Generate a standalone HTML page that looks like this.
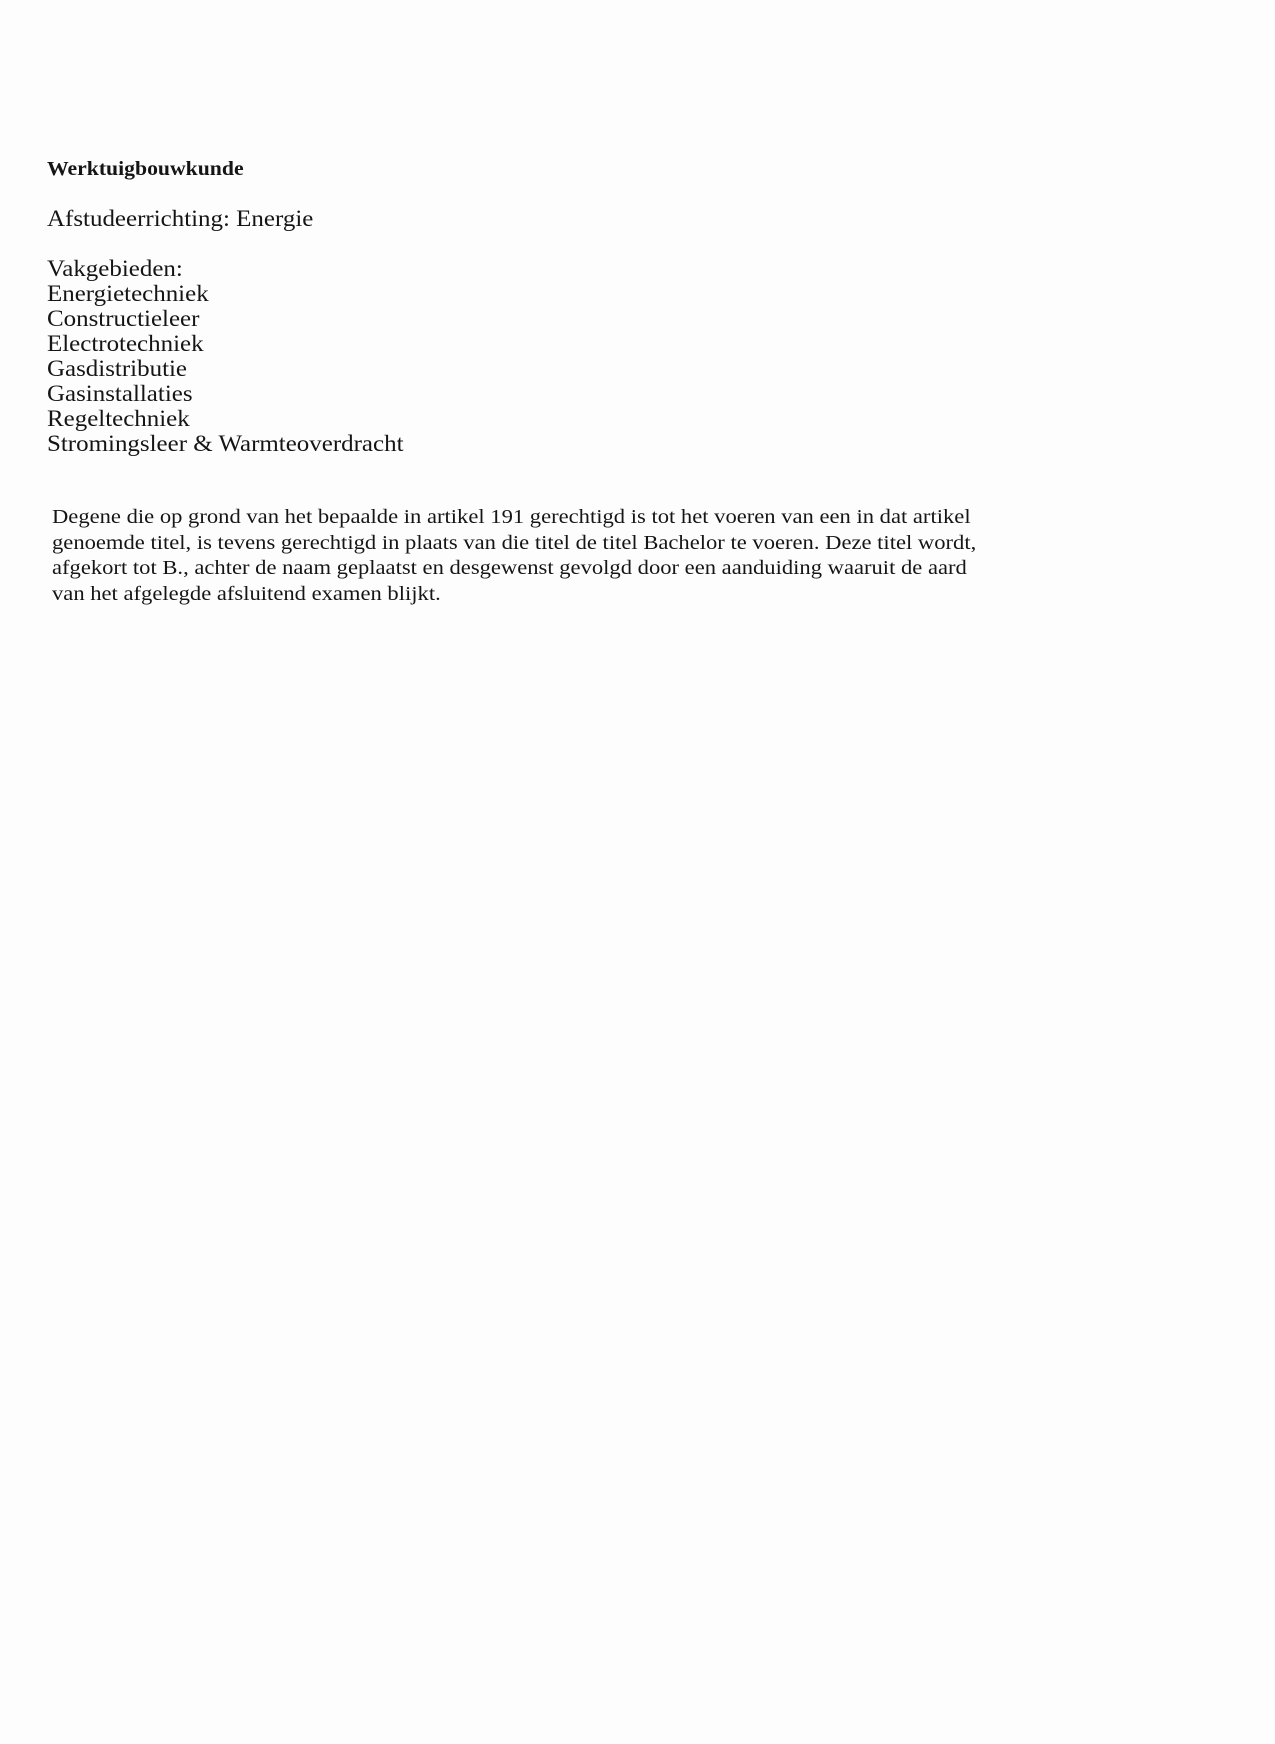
<!DOCTYPE html>
<html><head><style>
body{margin:0;width:1275px;height:1744px;background:#fdfdfd;position:relative;font-family:"Liberation Serif",serif;color:#151515;overflow:hidden}
.a{position:absolute;left:47px;white-space:nowrap;transform-origin:0 0}
.t{top:158px;font-weight:bold;font-size:20px;transform:scaleX(1.085)}
.list{top:206px;font-size:23px;line-height:25px;transform:scaleX(1.085)}
.p{left:52px;top:505px;font-size:19.5px;line-height:25.5px;transform:scaleX(1.158)}
.p div{white-space:nowrap}
</style></head><body>
<div class="a t">Werktuigbouwkunde</div>
<div class="a list">Afstudeerrichting: Energie<br><br>Vakgebieden:<br>Energietechniek<br>Constructieleer<br>Electrotechniek<br>Gasdistributie<br>Gasinstallaties<br>Regeltechniek<br>Stromingsleer &amp; Warmteoverdracht</div>
<div class="a p">
<div>Degene die op grond van het bepaalde in artikel 191 gerechtigd is tot het voeren van een in dat artikel</div>
<div>genoemde titel, is tevens gerechtigd in plaats van die titel de titel Bachelor te voeren. Deze titel wordt,</div>
<div>afgekort tot B., achter de naam geplaatst en desgewenst gevolgd door een aanduiding waaruit de aard</div>
<div>van het afgelegde afsluitend examen blijkt.</div>
</div>
</body></html>
